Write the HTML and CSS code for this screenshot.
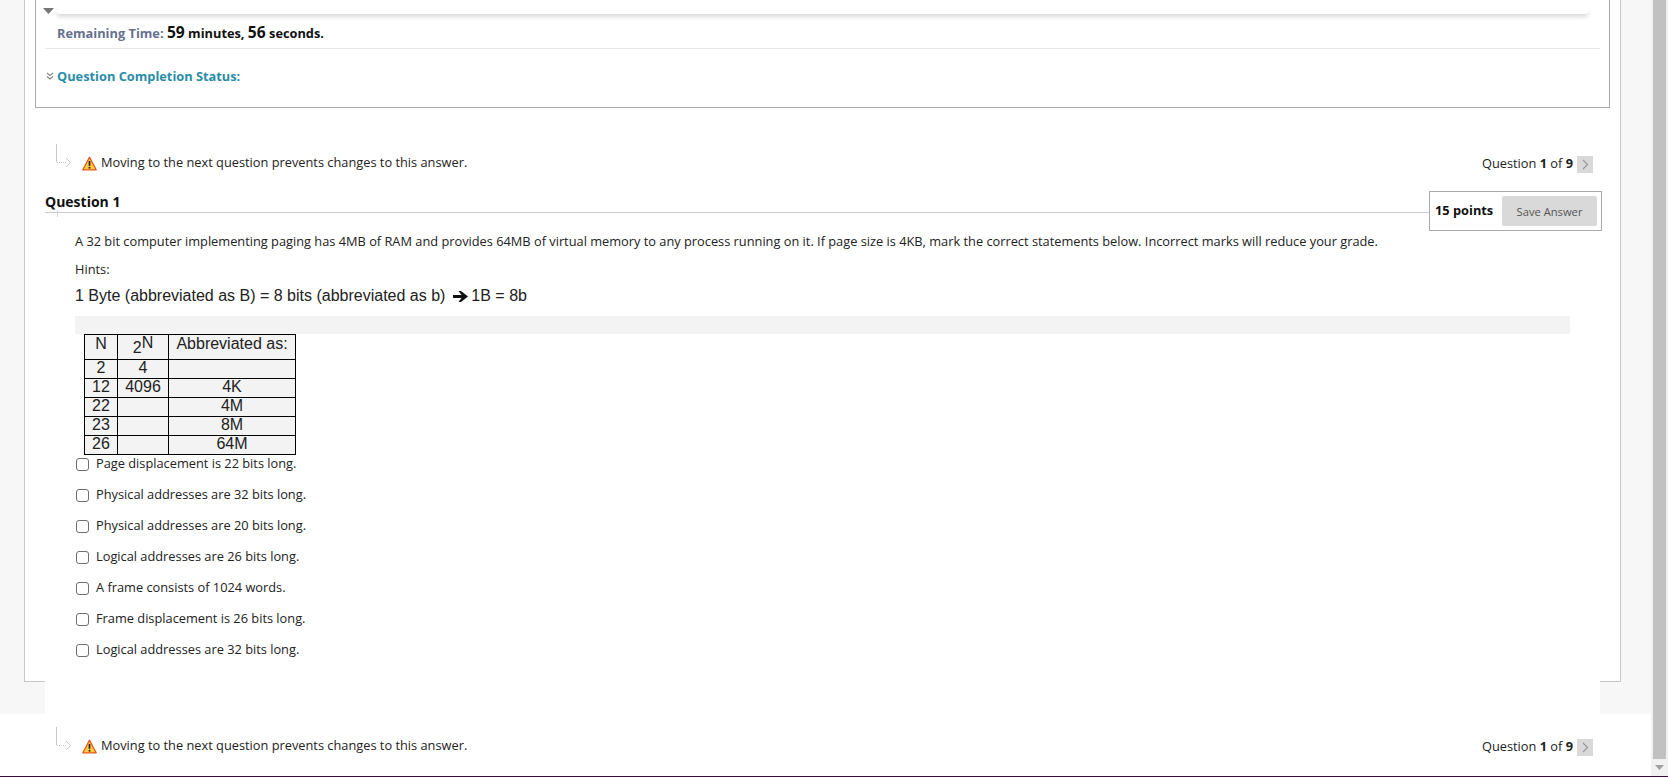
FILE: index.html
```html
<!DOCTYPE html>
<html lang="en">
<head>
<meta charset="utf-8">
<title>Test</title>
<link rel="stylesheet" href="styles.css">
</head>
<body>
<div class="page">
  <main class="main">
    <div class="frame">
      <section class="status">
        <div class="status-top">
          <svg class="caret" width="11" height="6" viewBox="0 0 11 6"><path d="M0 0h11L5.500 6z" fill="#777"/></svg>
          <div class="shadow-bar"></div>
        </div>
        <div class="timer"><span class="timer-label">Remaining Time:</span> <b class="num">59</b> <b>minutes,</b> <b class="num">56</b> <b>seconds.</b></div>
        <div class="completion">
          <svg class="chev" width="9" height="9" viewBox="0 0 9 9"><path d="M1 1l3 2.500 3-2.500M1 4.500l3 2.500 3-2.500" fill="none" stroke="#888" stroke-width="1.100"/></svg>
          <span>Question Completion Status:</span>
        </div>
      </section>

      <div class="notice-row first">
        <div class="notice">
          <svg class="arrow" width="16" height="24" viewBox="0 0 16 24"><path d="M.5 0v18" stroke="#c8c8c8" fill="none"/><path d="M1 18.500h10" stroke="#c8c8c8" stroke-dasharray="1 1" fill="none"/><path d="M10 14l4.500 4.500L10 23" stroke="#c8c8c8" fill="none"/></svg>
          <svg class="warn" width="15" height="15" viewBox="0 0 15 15"><path d="M7.500 1.200L14.200 13.800H.8z" fill="#ffcb3d" stroke="#e8541a" stroke-width="1.300" stroke-linejoin="round"/><path d="M7.500 5v4.800" stroke="#222" stroke-width="1.700"/><circle cx="7.500" cy="11.700" r="1" fill="#222"/></svg>
          <span class="notice-text">Moving to the next question prevents changes to this answer.</span>
        </div>
        <div class="pager">Question <b>1</b> of <b>9</b><span class="next"><svg width="7" height="11" viewBox="0 0 7 11"><path d="M1 1l4.500 4.500L1 10" fill="none" stroke="#999" stroke-width="1.200"/></svg></span></div>
      </div>

      <section class="question">
        <div class="q-head">
          <svg class="ghost" width="16" height="22" viewBox="0 0 16 22"><path d="M9 1l4 4-4 4" stroke="#d8d8d8" fill="none"/><path d="M1.500 14v7" stroke="#d8d8d8" fill="none"/></svg>
          <h3 class="q-title">Question 1</h3>
          <div class="q-points"><b class="pts">15 points</b><button class="save" type="button">Save Answer</button></div>
        </div>
        <div class="q-body">
          <p class="q-text">A 32 bit computer implementing paging has 4MB of RAM and provides 64MB of virtual memory to any process running on it. If page size is 4KB, mark the correct statements below. Incorrect marks will reduce your grade.</p>
          <p class="q-hints">Hints:</p>
          <p class="q-byte">1 Byte (abbreviated as B) = 8 bits (abbreviated as b) <svg class="arr" width="15" height="11" viewBox="0 0 15 11"><path d="M0 4h8.500L5.500 0H8l7 5.500L8 11H5.500l3-4H0z" fill="#111"/></svg> 1B = 8b</p>
          <div class="grey-wrap">
            <div class="grey-band"></div>
            <table class="ptable">
              <tr class="head"><td class="c1">N</td><td class="c2"><span class="two">2</span><span class="sup">N</span></td><td class="c3">Abbreviated as:</td></tr>
              <tr><td>2</td><td>4</td><td></td></tr>
              <tr><td>12</td><td>4096</td><td>4K</td></tr>
              <tr><td>22</td><td></td><td>4M</td></tr>
              <tr><td>23</td><td></td><td>8M</td></tr>
              <tr><td>26</td><td></td><td>64M</td></tr>
            </table>
          </div>
          <ul class="answers">
            <li><span class="box"></span>Page displacement is 22 bits long.</li>
            <li><span class="box"></span>Physical addresses are 32 bits long.</li>
            <li><span class="box"></span>Physical addresses are 20 bits long.</li>
            <li><span class="box"></span>Logical addresses are 26 bits long.</li>
            <li><span class="box"></span>A frame consists of 1024 words.</li>
            <li><span class="box"></span>Frame displacement is 26 bits long.</li>
            <li><span class="box"></span>Logical addresses are 32 bits long.</li>
          </ul>
        </div>
      </section>
    </div>
    <div class="tail"></div>
    <div class="footer">
      <div class="notice-row last">
        <div class="notice">
          <svg class="arrow" width="16" height="24" viewBox="0 0 16 24"><path d="M.5 0v18" stroke="#c8c8c8" fill="none"/><path d="M1 18.500h10" stroke="#c8c8c8" stroke-dasharray="1 1" fill="none"/><path d="M10 14l4.500 4.500L10 23" stroke="#c8c8c8" fill="none"/></svg>
          <svg class="warn" width="15" height="15" viewBox="0 0 15 15"><path d="M7.500 1.200L14.200 13.800H.8z" fill="#ffcb3d" stroke="#e8541a" stroke-width="1.300" stroke-linejoin="round"/><path d="M7.500 5v4.800" stroke="#222" stroke-width="1.700"/><circle cx="7.500" cy="11.700" r="1" fill="#222"/></svg>
          <span class="notice-text">Moving to the next question prevents changes to this answer.</span>
        </div>
        <div class="pager">Question <b>1</b> of <b>9</b><span class="next"><svg width="7" height="11" viewBox="0 0 7 11"><path d="M1 1l4.500 4.500L1 10" fill="none" stroke="#999" stroke-width="1.200"/></svg></span></div>
      </div>
    </div>
  </main>
  <aside class="scrollbar">
    <div class="thumb"></div>
    <svg class="down" width="9" height="5" viewBox="0 0 9 5"><path d="M0 0h9L4.500 5z" fill="#a0a0a0"/></svg>
  </aside>
</div>
<div class="bottom-line"></div>
</body>
</html>
```
FILE: styles.css
```css
* { box-sizing: border-box; }
html, body { margin: 0; padding: 0; height: 100%; overflow: hidden; }
body { font-family: "Open Sans", sans-serif; font-size: 12.8px; color: #1a1a1a; background: #fff; }
.page { display: flex; height: 776px; }
.main { flex: 1; min-width: 0; background: #f7f7f7; display: flex; flex-direction: column; }
.frame { margin: 0 30px 0 24px; height: 682px; background: #fff; border: 1px solid #c8c8c8; border-top: 0; padding: 0 0 0 10px; flex: none; }
.status { width: 1575px; height: 108px; border: 1px solid #aaa; border-top: 0; padding: 0 9px 0 0; }
.status-top { height: 15px; display: flex; align-items: flex-start; padding-top: 8px; }
.caret { margin: 0 0 0 7px; flex: none; }
.shadow-bar { flex: 1; height: 7px; margin: -1px 12px 0 3px; background: #fff; border-radius: 6px; box-shadow: 0 3px 4px rgba(0,0,0,.15); }
.timer { padding: 8px 0 0 12px; height: 34px; border-bottom: 1px solid #e8e8e8; margin-left: 9px; line-height: 18px; color: #111; white-space: nowrap; }
.timer b { font-weight: 700; }
.timer .num { font-size: 15.6px; }
.timer-label { color: #66708f; font-weight: 700; }
.completion { display: flex; align-items: center; gap: 2px; margin: 18px 0 0 10px; font-weight: 700; line-height: 18px; color: #2a8da8; }
.notice-row { display: flex; justify-content: space-between; align-items: flex-start; }
.notice-row.first { width: 1537px; margin: 36px 0 0 21px; height: 47px; }
.notice { display: flex; align-items: flex-start; color: #222; }
.arrow { margin: 0 10px 0 0; flex: none; }
.warn { margin: 12px 4px 0 0; flex: none; }
.notice-text { margin-top: 9px; line-height: 18px; }
.pager { display: flex; align-items: flex-start; padding-top: 10px; line-height: 18px; color: #222; white-space: pre; }
.pager b { font-weight: 700; }
.next { width: 16px; height: 17px; margin: 2px 0 0 4px; background: #d9d9d9; display: flex; align-items: center; justify-content: center; }
.question { margin-left: 10px; width: 1557px; }
.q-head { display: flex; align-items: flex-start; height: 40px; position: relative; }
.ghost { position: absolute; left: 11px; top: 5px; }
.q-title { flex: 1; margin: 0; font-size: 14px; font-weight: 700; color: #111; border-bottom: 1px solid #ccc; height: 22px; line-height: 22px; position: relative; }
.q-points { width: 173px; height: 40px; border: 1px solid #aaa; display: flex; align-items: center; justify-content: space-between; padding: 0 4px 0 5px; color: #111; background: #fff; }
.pts { margin-bottom: 2px; }
.save { width: 95px; height: 30px; background: #d9d9d9; border: 0; border-radius: 2px; font: 11.2px "Open Sans", sans-serif; color: #555; padding: 0; }
.q-body { padding: 0 32px 0 30px; }
.q-text { margin: 1px 0 0; line-height: 18px; color: #222; white-space: nowrap; }
.q-hints { margin: 10px 0 0; line-height: 18px; color: #222; }
.q-byte { margin: 7px 0 0; font: 16px/22px "Liberation Sans", Arial, sans-serif; color: #222; }
.arr { vertical-align: -1px; margin: 0 -1px 0 3px; }
.grey-wrap { margin-top: 9px; }
.grey-band { height: 18px; background: #f3f3f3; }
.ptable { border-collapse: collapse; margin: 0 0 0 9px; background: #f3f3f3; font: 16px/16px "Liberation Sans", Arial, sans-serif; color: #222; text-align: center; }
.ptable td { border: 1px solid #000; padding: 0 0 2px; height: 19px; }
.ptable .head td { height: 25px; vertical-align: top; padding: 0; line-height: 18px; }
.c1 { width: 33px; }
.c2 { width: 51px; }
.c3 { width: 127px; }
.two { position: relative; top: 4px; }
.ptable .sup { position: relative; top: -1px; }
.answers { list-style: none; margin: -1px 0 0; padding: 0; }
.answers li { display: flex; height: 31px; line-height: 18px; color: #222; }
.box { width: 13px; height: 13px; border: 1px solid #6f6f6f; border-radius: 3px; background: #fff; margin: 4px 7px 0 1px; flex: none; }
.tail { height: 33px; margin: -1px 51px 0 45px; background: #fff; flex: none; }
.footer { flex: 1; background: #fff; }
.notice-row.last { margin: 13px 0 0 56px; width: 1537px; }
.scrollbar { width: 17px; background: #f1f1f1; position: relative; flex: none; }
.thumb { width: 13px; height: 759px; margin: 0 2px; background: #c1c1c1; }
.down { position: absolute; left: 4px; bottom: 6px; }
.bottom-line { height: 1px; background: #3c0a3c; }
```
